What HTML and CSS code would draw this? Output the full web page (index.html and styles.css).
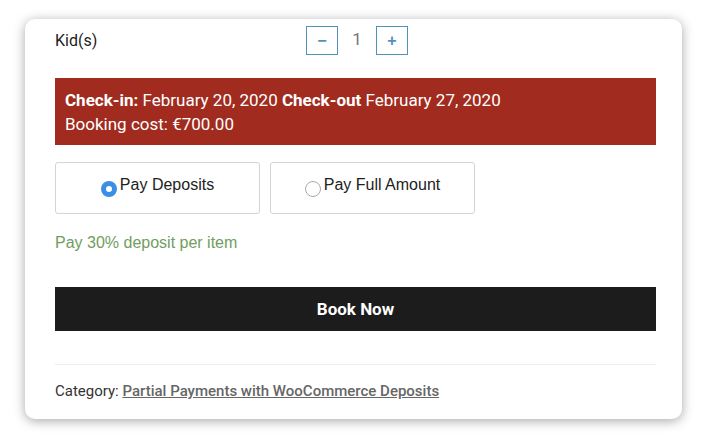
FILE: index.html
```html
<!DOCTYPE html>
<html lang="en">
<head>
    <meta charset="UTF-8">
    <meta name="viewport" content="width=device-width, initial-scale=1.0">
    <title>Booking</title>
    <link rel="stylesheet" href="styles.css">
</head>
<body>
    <div class="card">
        <div class="guest-row">
            <span class="guest-label">Kid(s)</span>
            <div class="qty">
                <button class="qty-btn">&minus;</button>
                <span class="qty-value">1</span>
                <button class="qty-btn">+</button>
            </div>
        </div>

        <div class="summary">
            <p><strong>Check-in:</strong> February 20, 2020 <strong>Check-out</strong> February 27, 2020</p>
            <p>Booking cost: &euro;700.00</p>
        </div>

        <div class="pay-options">
            <label class="pay-option">
                <input type="radio" name="pay" checked>Pay Deposits
            </label>
            <label class="pay-option">
                <input type="radio" name="pay">Pay Full Amount
            </label>
        </div>

        <p class="deposit-note">Pay 30% deposit per item</p>

        <button class="book-btn">Book Now</button>

        <div class="meta">
            Category: <a href="#">Partial Payments with WooCommerce Deposits</a>
        </div>
    </div>
</body>
</html>
```

FILE: styles.css
```css
body {
    margin: 0;
    padding: 19px 22px 22px 25px;
    background: #fff;
    font-family: Roboto, "Liberation Sans", Arial, sans-serif;
    color: #222;
}
.card {
    background: #fff;
    border-radius: 10px;
    box-shadow: 0 2px 12px rgba(0, 0, 0, 0.35);
    padding: 7px 26px 19px 30px;
}
.guest-row {
    display: grid;
    grid-template-columns: 251px auto;
    align-items: center;
    font-size: 16px;
}
.qty {
    display: flex;
    align-items: center;
}
.qty-btn {
    width: 32px;
    height: 29px;
    border: 1px solid #4f93b8;
    background: #fff;
    color: #4f93b8;
    font-family: "Liberation Sans", Arial, sans-serif;
    font-size: 16px;
    font-weight: bold;
    padding: 0;
}
.qty-value {
    width: 38px;
    text-align: center;
    color: #777;
    font-size: 17px;
    margin-top: -4px;
}
.summary {
    background: #a02b1e;
    color: #fff;
    margin-top: 23px;
    padding: 10px 10px 9px;
    font-size: 17px;
    line-height: 24px;
}
.summary p {
    margin: 0;
}
.pay-options {
    display: flex;
    gap: 10px;
    margin-top: 17px;
}
.pay-option {
    width: 205px;
    height: 52px;
    box-sizing: border-box;
    border: 1px solid #d4d4d4;
    border-radius: 3px;
    display: flex;
    justify-content: center;
    align-items: center;
    padding-bottom: 6px;
    font-family: "Liberation Sans", Arial, sans-serif;
    font-size: 16px;
    color: #222;
}
.pay-option input {
    appearance: none;
    width: 16px;
    height: 16px;
    margin: 8px 3px 0 0;
    border: 1px solid #aaa;
    border-radius: 50%;
    background: #fff;
}
.pay-option input:checked {
    border: 5.5px solid #3a8ee6;
    background: #fff;
}
.deposit-note {
    margin: 20px 0 0;
    color: #6f9e5e;
    font-family: "Liberation Sans", Arial, sans-serif;
    font-size: 16px;
}
.book-btn {
    display: block;
    width: 100%;
    height: 44px;
    margin-top: 35px;
    border: 0;
    background: #1c1c1c;
    color: #fff;
    font-family: Roboto, sans-serif;
    font-size: 17px;
    font-weight: bold;
}
.meta {
    margin-top: 33px;
    padding-top: 17px;
    border-top: 1px solid #ececec;
    font-size: 15px;
    color: #333;
}
.meta a {
    color: #666;
    font-weight: 500;
}
```
